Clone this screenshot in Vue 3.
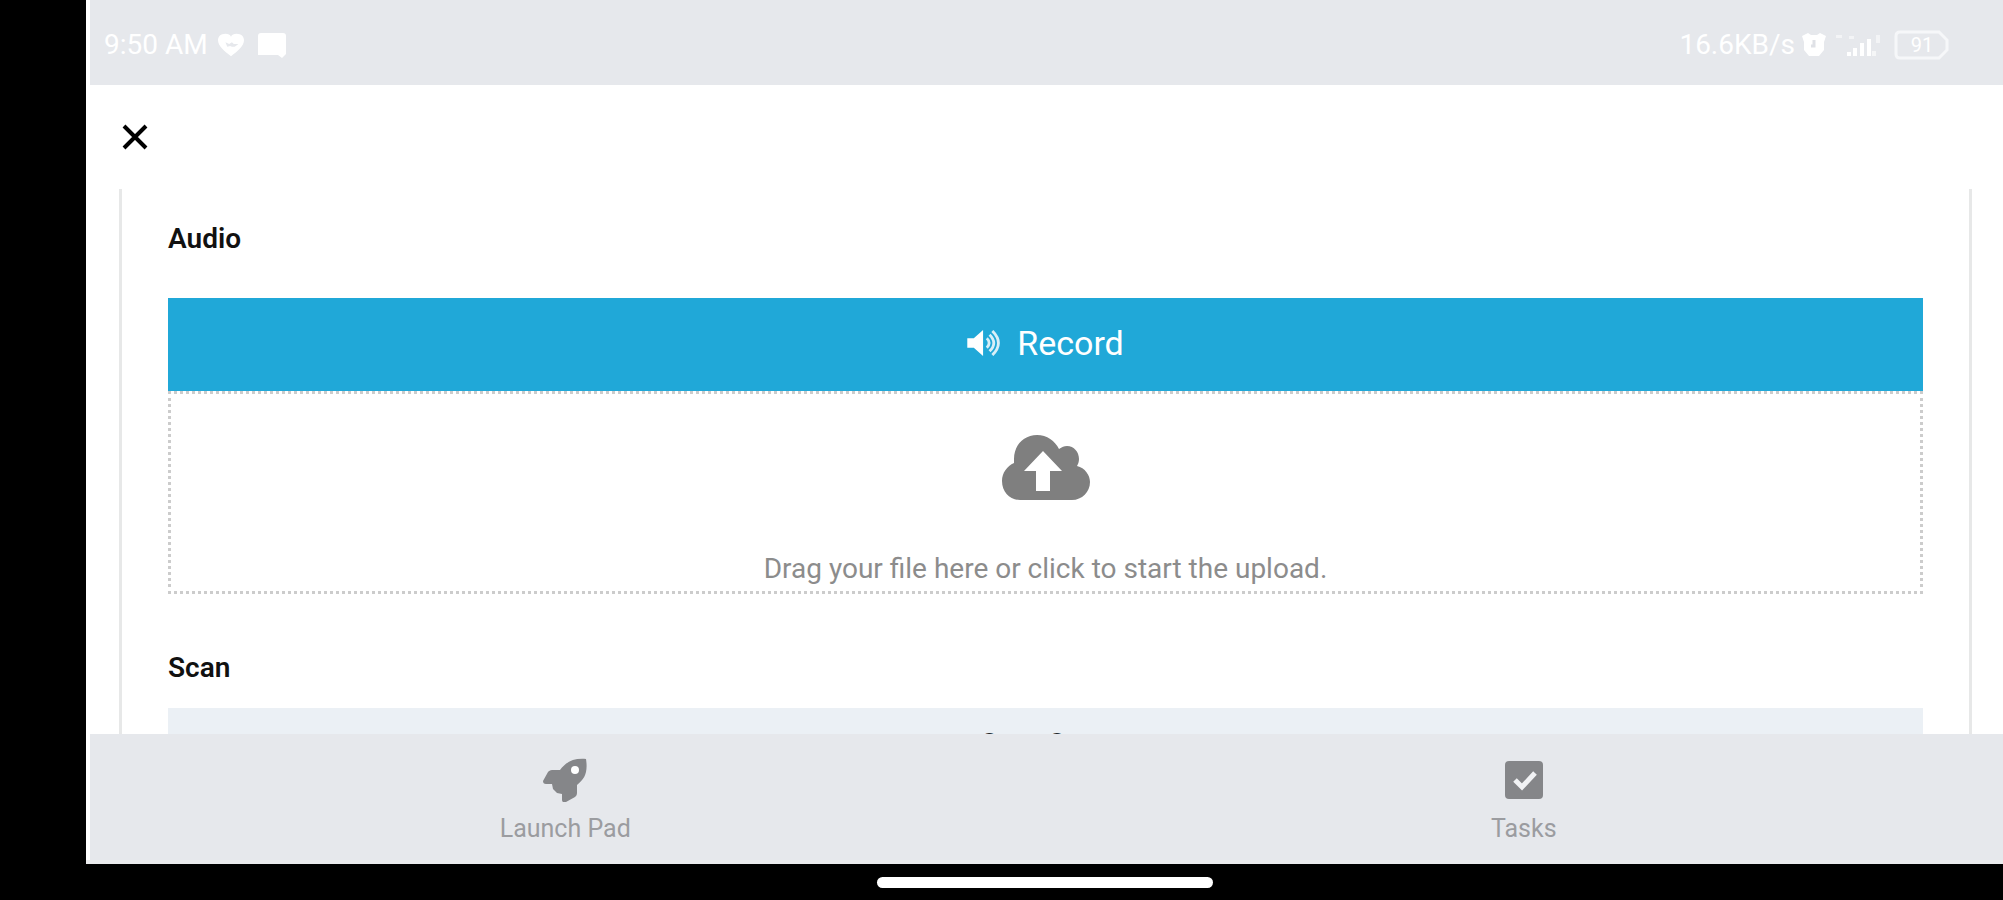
<template>
  <div class="device">
    <div class="app">
      <div class="status-bar">
        <div class="status-left">
          <span class="clock">9:50 AM</span>
          <svg width="26" height="24" viewBox="0 0 28 24">
            <path d="M8 0c3 0 5 1 6 3 1-2 3-3 6-3 5 0 8 3 8 7 0 6-7 12-14 17C7 19 0 13 0 7c0-4 3-7 8-7z" fill="#fff" />
            <path d="M8 9l4 2 3-2 2 2h5l-4 3h-3l-2-1-3 1z" fill="#e6e8ec" />
          </svg>
          <svg class="cast" width="28" height="26" viewBox="0 0 28 26">
            <path d="M3 1h22a3 3 0 0 1 3 3v18l-4 4-4-3H0V4a3 3 0 0 1 3-3z" fill="#fff" />
          </svg>
        </div>
        <div class="status-right">
          <span class="speed">16.6KB/s</span>
          <svg width="24" height="24" viewBox="0 0 24 24">
            <path d="M0 3l6-3 3 2h6l3-2 6 3-2 6v8l-5 6H7l-5-6V9z" fill="#fff" />
            <path d="M12 7v6h-3" fill="none" stroke="#dfe1e6" stroke-width="3" />
          </svg>
          <svg class="signal" width="50" height="24" viewBox="0 0 50 24" fill="#fff">
            <path d="M3 2h6v3H3zM16 3h5v3h-5zM43 2h4v8h-4z" opacity=".5" />
            <path d="M14 19h4v4h-4zM20 15h4v8h-4zM27 10h4v13h-4zM34 6h4v17h-4z" />
            <path d="M39 18h4v5h-4z" opacity=".6" />
          </svg>
          <span class="battery">
            <svg width="56" height="30" viewBox="0 0 56 30" fill="none" stroke="#f6f7f9" stroke-width="3">
              <path d="M6 2h39l8 8v10l-8 8H6q-4 0-4-4V6q0-4 4-4z" />
            </svg>
            <span class="battery-level">91</span>
          </span>
        </div>
      </div>

      <header class="header">
        <button class="close" type="button" aria-label="Close">
          <svg width="26" height="26" viewBox="0 0 26 26">
            <path d="M2 2l22 22M24 2L2 24" stroke="#000" stroke-width="4" />
          </svg>
        </button>
      </header>

      <main class="content">
        <div class="card">
          <section>
            <h2>Audio</h2>
            <button class="record" type="button">
              <svg width="34" height="26" viewBox="0 0 36 28">
                <path d="M0 9h7l10-9v28L7 19H0z" fill="#fff" />
                <path d="M21 9q5 5 0 10M24 5q9 9 0 18M27 1q13 13 0 26" fill="none" stroke="#d8eff7" stroke-width="3" />
              </svg>
              <span>Record</span>
            </button>
            <label class="dropzone">
              <input type="file" accept="audio/*" />
              <svg width="88" height="65" viewBox="0 0 88 65">
                <path
                  d="M18 65C8 65 0 57 0 46c0-8 5-15 12-18v-4C12 10 22 0 35 0c10 0 18 6 22 14 3-2 5-3 8-3 7 0 12 6 12 13 0 3-1 5-2 7 8 2 13 9 13 16 0 10-8 18-18 18z"
                  fill="#7f7f7f"
                />
                <path d="M41 16l19 20H48v20H34V36H22z" fill="#fff" />
              </svg>
              <span>Drag your file here or click to start the upload.</span>
            </label>
          </section>

          <section>
            <h2>Scan</h2>
            <button class="scan" type="button">Start Scan</button>
          </section>
        </div>
      </main>

      <nav class="tabs">
        <a v-for="tab in tabs" :key="tab.id" class="tab" href="#">
          <svg v-if="tab.id === 'launch'" width="44" height="44" viewBox="0 0 44 44">
            <path
              d="M43 1C30 0 23 4 17 12H9c-2 0-3 1-4 2L0 23c0 2 1 3 3 3h6l1 5 4 4 5 1v6c0 2 2 3 4 2l9-5c1-1 2-2 2-4v-8c8-6 11-13 9-26z"
              fill="#858689"
            />
            <circle cx="32" cy="12" r="4" fill="#fff" />
          </svg>
          <svg v-else width="44" height="44" viewBox="0 0 44 44">
            <rect x="3" y="3" width="38" height="38" rx="4" fill="#858689" />
            <path d="M13 22l7 7 13-14" fill="none" stroke="#f1f2f4" stroke-width="5" />
          </svg>
          <span>{{ tab.label }}</span>
        </a>
      </nav>
    </div>

    <div class="gesture-area">
      <div class="gesture-bar"></div>
    </div>
  </div>
</template>

<script setup>
const tabs = [
  { id: 'launch', label: 'Launch Pad' },
  { id: 'tasks', label: 'Tasks' }
]
</script>

<style>
body {
  margin: 0;
  background: #000;
}
</style>

<style scoped>
.device {
  display: flex;
  flex-direction: column;
  box-sizing: border-box;
  height: 100vh;
  padding-left: 86px;
  background: #000;
  font-family: Roboto, sans-serif;
}

.app {
  display: flex;
  flex: 1;
  flex-direction: column;
  min-height: 0;
  background: #fff;
}

svg {
  flex: none;
}

.status-bar {
  display: flex;
  flex: none;
  align-items: center;
  justify-content: space-between;
  box-sizing: border-box;
  height: 85px;
  padding: 4px 53px 0 18px;
  background: #e6e8ec;
  box-shadow: inset 4px 0 #fff;
  color: #fff;
  font-size: 28px;
}

.status-left,
.status-right {
  display: flex;
  align-items: center;
}

.status-left {
  gap: 10px;
}

.cast {
  margin-left: 4px;
}

.status-right {
  gap: 7px;
}

.battery {
  display: flex;
  position: relative;
  margin-left: 4px;
}

.battery-level {
  position: absolute;
  inset: 0;
  font-size: 20px;
  line-height: 30px;
  text-align: center;
}

.header {
  display: flex;
  flex: none;
  align-items: center;
  height: 104px;
  padding-left: 36px;
}

.close {
  display: flex;
  padding: 0;
  border: none;
  background: none;
  cursor: pointer;
}

.content {
  flex: 1;
  min-height: 0;
  padding: 0 31px 0 33px;
  overflow: hidden;
}

.card {
  padding: 32px 46px;
  border: solid #e7e8e8;
  border-width: 0 3px;
}

h2 {
  margin: 0;
  color: #111;
  font-size: 28px;
  font-weight: 600;
  line-height: 36px;
}

.record {
  display: flex;
  align-items: center;
  justify-content: center;
  gap: 16px;
  width: 100%;
  height: 93px;
  margin-top: 41px;
  padding: 0 0 4px;
  border: none;
  background: #20a8d8;
  color: #fff;
  font-family: inherit;
  font-size: 34px;
  cursor: pointer;
}

.dropzone {
  display: flex;
  flex-direction: column;
  align-items: center;
  box-sizing: border-box;
  height: 203px;
  padding-top: 41px;
  border: 3px dotted #ccc;
  color: #8c8c8c;
  font-size: 28px;
  line-height: 36px;
  cursor: pointer;
}

.dropzone input {
  position: absolute;
  width: 1px;
  height: 1px;
  opacity: 0;
}

.dropzone span {
  margin-top: 51px;
}

section + section {
  margin-top: 56px;
}

.scan {
  width: 100%;
  height: 70px;
  margin-top: 22px;
  padding: 0;
  border: none;
  background: #ebf0f5;
  color: #23282c;
  font-family: inherit;
  font-size: 28px;
}

.tabs {
  display: flex;
  flex: none;
  box-sizing: border-box;
  height: 130px;
  border-bottom: 4px solid #ebecee;
  background: #e6e8ec;
  box-shadow: inset 4px 0 #fff;
}

.tab {
  display: flex;
  flex: 1;
  flex-direction: column;
  align-items: center;
  gap: 11px;
  padding-top: 24px;
  color: #9b9ca0;
  font-size: 25px;
  line-height: 32px;
  text-decoration: none;
}

.gesture-area {
  display: flex;
  flex: none;
  align-items: center;
  justify-content: center;
  height: 36px;
}

.gesture-bar {
  width: 336px;
  height: 11px;
  border-radius: 6px;
  background: #fff;
}
</style>
